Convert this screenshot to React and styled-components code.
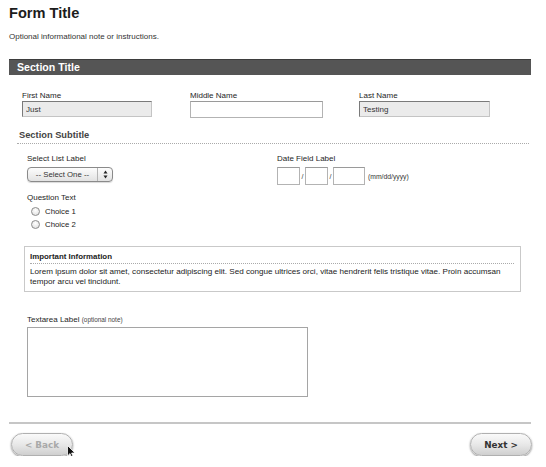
import React from 'react';
import styled, { createGlobalStyle } from 'styled-components';

const GlobalStyle = createGlobalStyle`
  html, body {
    margin: 0;
    padding: 0;
    background: #fff;
  }
  body {
    font-family: "Liberation Sans", Arial, sans-serif;
    color: #222;
  }
`;

const Page = styled.div`
  width: 522px;
  padding: 3px 15px 0 9px;
`;

const Title = styled.h1`
  margin: 0;
  font-size: 14.6px;
  line-height: 20px;
  font-weight: bold;
  color: #1c1c1c;
`;

const Note = styled.p`
  margin: 9px 0 0;
  font-size: 8px;
  line-height: 10px;
  color: #333;
`;

const SectionBar = styled.div`
  margin-top: 17px;
  height: 16px;
  background: #555;
  border-top: 1px solid #3d3d3d;
  box-sizing: border-box;
  color: #fff;
  font-size: 10.6px;
  font-weight: bold;
  line-height: 15px;
  padding-left: 8px;
`;

const NameRow = styled.div`
  display: grid;
  grid-template-columns: 168px 169px auto;
  padding-left: 13px;
  margin-top: 16px;
`;

const Field = styled.div`
  display: flex;
  flex-direction: column;
`;

const Label = styled.label`
  display: block;
  font-size: 8px;
  line-height: 10px;
  color: #1e1e1e;
  margin-bottom: ${p => p.$gap || 0}px;
`;

const Small = styled.span`
  font-size: 6.4px;
  color: #444;
`;

const TextInput = styled.input`
  box-sizing: border-box;
  width: ${p => p.$w || 130}px;
  height: ${p => p.$h || 16}px;
  margin: 0;
  padding: 0 3px;
  font-family: inherit;
  font-size: 8px;
  color: #333;
  background: ${p => (p.$filled ? '#ebebeb' : '#fff')};
  border: 1px solid ${p => (p.$filled ? '#c4c4c4' : '#b3b3b3')};
  border-top-color: ${p => (p.$filled ? '#7a7a7a' : '#9a9a9a')};
  border-left-color: ${p => (p.$filled ? '#7a7a7a' : '#b3b3b3')};
  outline: none;
`;

const Subtitle = styled.div`
  margin: 12px 2px 0 8px;
  padding: 0 0 3px 2px;
  font-size: 9.3px;
  font-weight: bold;
  line-height: 10px;
  color: #444;
  border-bottom: 1px dotted #aaa;
`;

const TwoCol = styled.div`
  display: grid;
  grid-template-columns: 250px auto;
  padding-left: 18px;
  margin-top: 10px;
`;

const SelectBox = styled.div`
  box-sizing: border-box;
  width: 86px;
  height: 15px;
  display: flex;
  align-items: stretch;
  border: 1px solid #8a8a8a;
  border-radius: 4px;
  background: linear-gradient(#fdfdfd, #e2e2e2);
  box-shadow: 0 1px 1px rgba(0, 0, 0, 0.15);
  font-size: 7.8px;
  color: #333;
`;

const SelectText = styled.div`
  flex: 1;
  display: flex;
  align-items: center;
  justify-content: center;
  border-right: 1px solid #b5b5b5;
`;

const SelectArrows = styled.div`
  width: 14px;
  display: flex;
  align-items: center;
  justify-content: center;
`;

const DateRow = styled.div`
  display: flex;
  align-items: center;
`;

const Slash = styled.span`
  width: 5px;
  text-align: center;
  font-size: 7px;
  color: #333;
`;

const Hint = styled.span`
  margin-left: 3px;
  font-size: 6.8px;
  color: #333;
`;

const Question = styled.div`
  padding-left: 18px;
  margin-top: 8px;
`;

const Choice = styled.div`
  display: flex;
  align-items: center;
  height: 13px;
  padding-left: 4px;
  font-size: 7.8px;
  color: #222;
`;

const Radio = styled.span`
  box-sizing: border-box;
  width: 9px;
  height: 9px;
  border-radius: 50%;
  border: 1px solid #8c8c8c;
  background: radial-gradient(circle at 50% 35%, #fff, #dcdcdc);
  margin-right: 5px;
`;

const InfoBox = styled.div`
  margin: 15px 10px 0 15px;
  border: 1px solid #c9c9c9;
  padding: 5px 6px 4px 5px;
  height: 46px;
  box-sizing: border-box;
`;

const InfoHead = styled.div`
  font-size: 7.9px;
  font-weight: bold;
  line-height: 10px;
  color: #222;
  padding-bottom: 1px;
  border-bottom: 1px dotted #aaa;
`;

const InfoText = styled.p`
  margin: 3px 0 0;
  font-size: 8.1px;
  line-height: 10px;
  color: #222;
`;

const TextareaField = styled.div`
  padding-left: 18px;
  margin-top: 23px;
  display: flex;
  flex-direction: column;
`;

const Area = styled.textarea`
  box-sizing: border-box;
  width: 281px;
  height: 70px;
  margin: 0;
  resize: none;
  border: 1px solid #a5a5a5;
  outline: none;
`;

const Divider = styled.hr`
  margin: 25px 0 0;
  border: none;
  height: 2px;
  background: #c6c6c6;
`;

const Footer = styled.div`
  display: flex;
  justify-content: space-between;
  margin-top: 9px;
  padding: 0 0 0 2px;
`;

const Pill = styled.button`
  position: relative;
  box-sizing: border-box;
  width: 62px;
  height: 23px;
  border-radius: 12px;
  border: 1px solid #b0b0b0;
  background: linear-gradient(#fafafa, #e6e6e6 55%, #cfcfcf);
  box-shadow: 0 1px 2px rgba(0, 0, 0, 0.45);
  font-family: "DejaVu Sans", Verdana, sans-serif;
  font-size: 8.8px;
  font-weight: bold;
  color: ${p => (p.disabled ? '#a9a9a9' : '#333')};
  padding: 0;
  margin-right: ${p => p.$mr || 0}px;
`;

const Cursor = styled.svg`
  position: absolute;
  left: 55px;
  top: 11px;
`;

const Arrows = () => (
  <svg width="5" height="9" viewBox="0 0 5 9">
    <path d="M2.5 0.5 L4.5 3.5 L0.5 3.5 Z" fill="#222" />
    <path d="M2.5 8.5 L4.5 5.5 L0.5 5.5 Z" fill="#222" />
  </svg>
);

const App = () => (
  <>
    <GlobalStyle />
    <Page>
      <Title>Form Title</Title>
      <Note>Optional informational note or instructions.</Note>

      <SectionBar>Section Title</SectionBar>

      <NameRow>
        <Field>
          <Label>First Name</Label>
          <TextInput $filled $w={130} readOnly value="Just" />
        </Field>
        <Field>
          <Label>Middle Name</Label>
          <TextInput $w={133} $h={17} readOnly value="" />
        </Field>
        <Field>
          <Label>Last Name</Label>
          <TextInput $filled $w={131} readOnly value="Testing" />
        </Field>
      </NameRow>

      <Subtitle>Section Subtitle</Subtitle>

      <TwoCol>
        <Field>
          <Label $gap={3}>Select List Label</Label>
          <SelectBox>
            <SelectText>-- Select One --</SelectText>
            <SelectArrows>
              <Arrows />
            </SelectArrows>
          </SelectBox>
        </Field>
        <Field>
          <Label $gap={3}>Date Field Label</Label>
          <DateRow>
            <TextInput $w={23} $h={18} readOnly value="" />
            <Slash>/</Slash>
            <TextInput $w={23} $h={18} readOnly value="" />
            <Slash>/</Slash>
            <TextInput $w={32} $h={18} readOnly value="" />
            <Hint>(mm/dd/yyyy)</Hint>
          </DateRow>
        </Field>
      </TwoCol>

      <Question>
        <Label $gap={2}>Question Text</Label>
        <Choice>
          <Radio />
          Choice 1
        </Choice>
        <Choice>
          <Radio />
          Choice 2
        </Choice>
      </Question>

      <InfoBox>
        <InfoHead>Important Information</InfoHead>
        <InfoText>
          Lorem ipsum dolor sit amet, consectetur adipiscing elit. Sed congue ultrices orci, vitae hendrerit felis
          tristique vitae. Proin accumsan tempor arcu vel tincidunt.
        </InfoText>
      </InfoBox>

      <TextareaField>
        <Label $gap={2}>
          Textarea Label <Small>(optional note)</Small>
        </Label>
        <Area />
      </TextareaField>

      <Divider />

      <Footer>
        <Pill disabled>
          &lt; Back
          <Cursor width="9" height="14" viewBox="0 0 9 14">
            <path d="M0.5 0.5 L0.5 11 L3 8.6 L4.8 13 L6.4 12.3 L4.6 8 L8 8 Z" fill="#111" stroke="#fff" strokeWidth="0.8" />
          </Cursor>
        </Pill>
        <Pill $mr={-1}>Next &gt;</Pill>
      </Footer>
    </Page>
  </>
);

export default App;
